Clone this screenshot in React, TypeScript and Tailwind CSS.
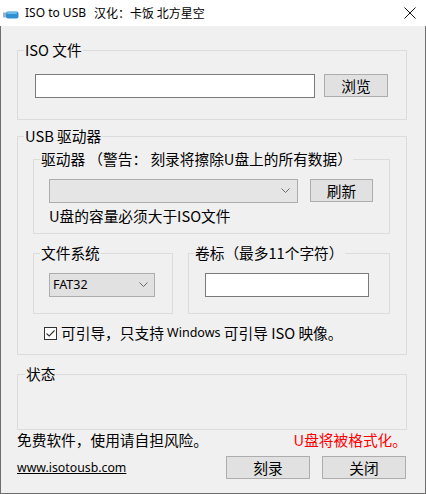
import React from "react";

const CJK = { fontFamily: '"Noto Sans CJK SC", "Noto Sans", sans-serif' };
const LAT = { fontFamily: '"Noto Sans", "Noto Sans CJK SC", sans-serif' };

function Group({
  label,
  className = "",
  children,
}: {
  label: string;
  className?: string;
  children?: React.ReactNode;
}) {
  return (
    <fieldset className={`border border-[#dcdcdc] pl-[6px] ${className}`}>
      <legend className="px-[1px] text-[14.7px] leading-[16px] text-black whitespace-pre" style={CJK}>
        {label}
      </legend>
      {children}
    </fieldset>
  );
}

function Button({ label, className = "" }: { label: string; className?: string }) {
  return (
    <div
      className={`flex items-center justify-center border border-[#adadad] bg-[#e1e1e1] text-[14.7px] leading-[16px] text-black ${className}`}
      style={CJK}
    >
      {label}
    </div>
  );
}

function Chevron() {
  return (
    <svg width="9" height="6" viewBox="0 0 9 6" className="block">
      <path d="M0.5 0.5 L4.5 4.5 L8.5 0.5" fill="none" stroke="#6b6b6b" strokeWidth="1" />
    </svg>
  );
}

export default function App() {
  return (
    <div className="w-[426px] h-[494px] flex flex-col bg-[#f0f0f0] overflow-hidden" style={CJK}>
      {/* Title bar */}
      <div className="h-[26px] shrink-0 bg-white flex items-center">
        <svg width="16" height="8" viewBox="0 0 16 8" className="ml-[3px] mt-[3px]">
          <rect x="0" y="1.5" width="3" height="5" fill="#9ab3c8" />
          <rect x="3" y="0.5" width="12.5" height="7" rx="2" fill="#2f8fd1" />
          <rect x="4" y="1" width="10" height="2" rx="1" fill="#6cbcec" />
        </svg>
        <span className="ml-[6px] text-[12px] leading-[16px] text-black whitespace-pre" style={LAT}>
          ISO to USB
        </span>
        <span className="ml-[8px] text-[12px] leading-[16px] text-black whitespace-pre" style={CJK}>
          {"汉化：卡饭 北方星空"}
        </span>
        <div className="flex-1" />
        <svg width="12" height="12" viewBox="0 0 12 12" className="mr-[10px]">
          <path d="M0.5 0.5 L11.5 11.5 M11.5 0.5 L0.5 11.5" stroke="#111" strokeWidth="1" />
        </svg>
      </div>

      {/* Body */}
      <div className="flex-1 flex flex-col border-x border-b border-[#6e6e6e] pl-[16px] pr-[18px]">
        {/* ISO file */}
        <Group label="ISO 文件" className="mt-[16px]">
          <div className="flex items-start pl-[11px] pt-[16px] pb-[21px]">
            <div className="w-[280px] h-[24px] border border-[#7a7a7a] bg-white" />
            <Button label="浏览" className="ml-[9px] w-[64px] h-[23px]" />
          </div>
        </Group>

        {/* USB drive */}
        <Group label="USB 驱动器" className="mt-[8px]">
          <div className="flex flex-col pl-[9px] pt-[7px] pb-[13px]">
            <Group label="驱动器 （警告： 刻录将擦除U盘上的所有数据）" className="w-[357px]">
              <div className="flex flex-col pl-[9px] pt-[12px] pb-[9px]">
                <div className="flex items-start">
                  <div className="w-[249px] h-[24px] border border-[#adadad] bg-[#e5e5e5] flex items-center justify-end pr-[7px]">
                    <Chevron />
                  </div>
                  <Button label="刷新" className="ml-[12px] w-[63px] h-[23px]" />
                </div>
                <div className="mt-[5px] text-[14.7px] leading-[16px] text-black">
                  U盘的容量必须大于ISO文件
                </div>
              </div>
            </Group>

            <div className="flex mt-[11px]">
              <Group label="文件系统" className="w-[140px]">
                <div className="pl-[9px] pt-[12px] pb-[16px]">
                  <div className="w-[106px] h-[24px] border border-[#adadad] bg-[#e1e1e1] flex items-center pl-[3px] pr-[6px]">
                    <span className="text-[12.5px] leading-[16px] text-black" style={LAT}>
                      FAT32
                    </span>
                    <div className="flex-1" />
                    <Chevron />
                  </div>
                </div>
              </Group>
              <Group label="卷标（最多11个字符）" className="ml-[15px] w-[202px] !pl-[5px]">
                <div className="pl-[11px] pt-[12px] pb-[16px]">
                  <div className="w-[164px] h-[24px] border border-[#7a7a7a] bg-white" />
                </div>
              </Group>
            </div>

            <div className="flex items-center mt-[11px] ml-[11px]">
              <div className="w-[13px] h-[13px] border border-[#333333] bg-white flex items-center justify-center">
                <svg width="9" height="7" viewBox="0 0 9 7">
                  <path d="M0.5 3.5 L3.2 6 L8.5 0.5" fill="none" stroke="#333333" strokeWidth="1.1" />
                </svg>
              </div>
              <span className="ml-[4px] text-[14.7px] leading-[16px] text-black whitespace-pre">
                {"可引导，只支持 "}
              </span>
              <span className="text-[12.5px] leading-[16px] text-black whitespace-pre" style={LAT}>
                Windows
              </span>
              <span className="text-[14.7px] leading-[16px] text-black whitespace-pre">
                {" 可引导 ISO 映像。"}
              </span>
            </div>
          </div>
        </Group>

        {/* Status */}
        <Group label="状态" className="mt-[11px] !pl-[7px]">
          <div className="h-[47px]" />
        </Group>

        <div className="flex items-center justify-between mt-[2px]">
          <span className="text-[14.7px] leading-[16px] text-black">免费软件，使用请自担风险。</span>
          <span className="text-[14.7px] leading-[16px] text-[#ff0000]">U盘将被格式化。</span>
        </div>

        <div className="flex items-center mt-[8px]">
          <span className="text-[12.3px] leading-[16px] text-black underline" style={LAT}>
            www.isotousb.com
          </span>
          <div className="flex-1" />
          <Button label="刻录" className="w-[84px] h-[23px]" />
          <Button label="关闭" className="ml-[12px] mr-[1px] w-[84px] h-[23px]" />
        </div>
      </div>
    </div>
  );
}
